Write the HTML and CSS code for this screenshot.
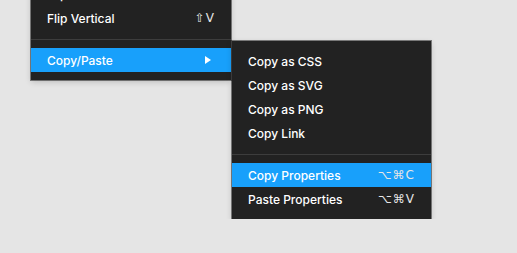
FILE: index.html
```html
<!DOCTYPE html>
<html lang="en">
<head>
  <meta charset="UTF-8">
  <title>Menu</title>
  <link rel="stylesheet" href="styles.css">
</head>
<body>
  <div class="stage">
    <ul class="menu menu-main">
      <li class="item"><span>Flip Horizontal</span><span class="key">⇧H</span></li>
      <li class="item"><span>Flip Vertical</span><span class="key">⇧V</span></li>
      <li class="sep"></li>
      <li class="item active"><span>Copy/Paste</span><span class="arrow"></span></li>
    </ul>
    <ul class="menu menu-sub">
      <li class="item"><span>Copy as CSS</span></li>
      <li class="item"><span>Copy as SVG</span></li>
      <li class="item"><span>Copy as PNG</span></li>
      <li class="item"><span>Copy Link</span></li>
      <li class="sep"></li>
      <li class="item active"><span>Copy Properties</span><span class="key">⌥⌘C</span></li>
      <li class="item"><span>Paste Properties</span><span class="key">⌥⌘V</span></li>
    </ul>
  </div>
</body>
</html>
```

FILE: styles.css
```css
*{
  margin: 0;
  padding: 0;
  box-sizing: border-box;
}
body{
  background: #e5e5e5;
  font-family: Inter, "Liberation Sans", "DejaVu Sans", sans-serif;
  font-size: 12px;
  color: #fff;
  overflow: hidden;
}
.stage{
  display: flex;
  align-items: flex-start;
  padding-left: 31px;
}
.menu{
  list-style: none;
  background: #222;
  padding: 8px 0;
  box-shadow: 0 0 0 1px rgba(0,0,0,.45), 0 2px 6px rgba(0,0,0,.18);
}
.menu-main{
  width: 200px;
  margin-top: -26px;
}
.menu-sub{
  width: 199px;
  margin-top: 41px;
  margin-left: 1px;
}
.item{
  display: flex;
  align-items: center;
  justify-content: space-between;
  height: 24px;
  padding: 0 16px;
  font-weight: 500;
}
.item.active{
  background: #18a0fb;
}
.key{
  font-family: "DejaVu Sans", sans-serif;
  font-size: 12px;
  letter-spacing: 1px;
  color: #e6e6e6;
}
.arrow{
  width: 0;
  height: 0;
  margin-right: 4px;
  border-left: 6px solid #fff;
  border-top: 4px solid transparent;
  border-bottom: 4px solid transparent;
}
.sep{
  height: 1px;
  margin: 9px 0 8px;
  background: #3d3d3d;
}
```
